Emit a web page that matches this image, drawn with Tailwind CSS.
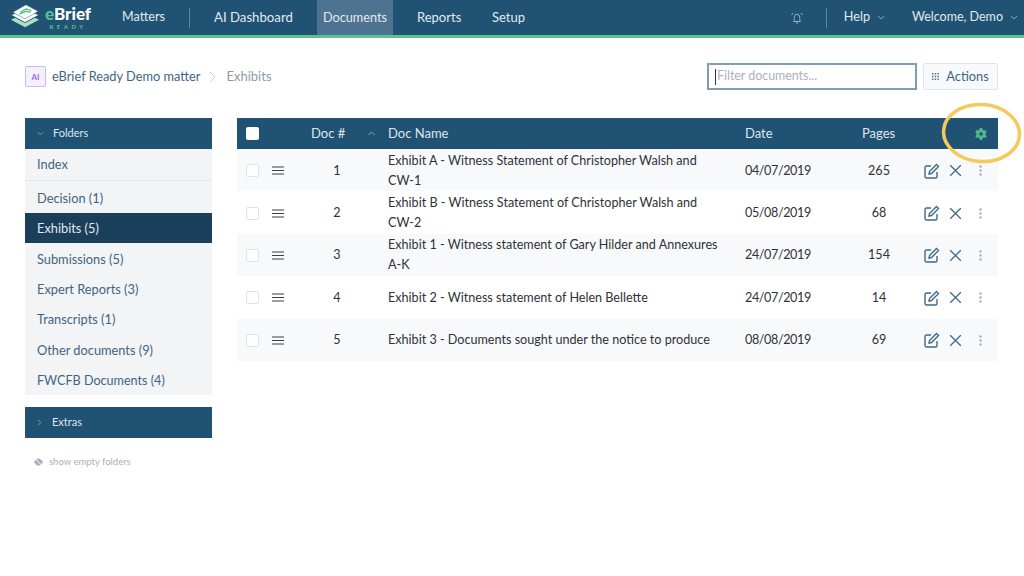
<!DOCTYPE html>
<html lang="en">
<head>
    <meta charset="UTF-8">
    <title>Exhibits - eBrief Ready</title>
    <script src="https://cdn.jsdelivr.net/npm/@tailwindcss/browser@4"></script>
</head>
<body class="relative w-[1024px] h-[576px] overflow-hidden bg-white font-['Lato','Open_Sans',sans-serif] text-[13px]">
    <!-- Top nav -->
    <header class="h-[38px] bg-[#205274] border-b-[3px] border-[#5cc08f] flex text-[#e3e9ee]">
        <div class="w-[122px] flex items-start pl-[10px] pt-[3px] gap-[4px]">
            <svg width="31" height="26" viewBox="0 0 33 26">
                <path d="M1 17l15-7 15 7-15 8z" fill="#a9e0c0"/>
                <path d="M1 12l15-7 15 7-15 8z" fill="#ffffff" stroke="#205274" stroke-width="1"/>
                <path d="M3 9L17 1l13 7-14 8z" fill="#ffffff" stroke="#205274" stroke-width="0.5"/>
                <path d="M11 9l6-3.500 6 1.500M10 11l7-3 5 1" fill="none" stroke="#5cc08f" stroke-width="1.500"/>
            </svg>
            <div class="flex flex-col items-center leading-none pt-[2px]">
                <span class="text-[17px] font-black leading-[17px] text-white"><span class="text-[#5cc08f]">e</span>Brief</span>
                <span class="text-[6px] font-bold tracking-[3.500px] text-[#5cc08f] mt-[1px] leading-[7px]">READY</span>
            </div>
        </div>
        <nav class="flex items-center h-[35px]">
            <a class="w-[67px] text-[12.600px]">Matters</a>
            <span class="w-px h-[20px] bg-white/30"></span>
            <a class="ml-[24px] w-[103px] text-[13.200px]">AI Dashboard</a>
            <a class="w-[76px] h-full flex items-center justify-center bg-[#4e7390] text-[12.700px]">Documents</a>
            <a class="ml-[24px] w-[75px]">Reports</a>
            <a>Setup</a>
        </nav>
        <div class="ml-auto flex items-center h-[35px]">
            <svg width="14" height="14" viewBox="0 0 14 14" fill="none" stroke="#9fb4c4" stroke-width="1">
                <path d="M3.500 10.500c.8-1 .8-2.500.8-4 0-2 1.200-3.300 2.700-3.300s2.700 1.300 2.700 3.300c0 1.500 0 3 .8 4z"/>
                <path d="M6 12h2M1.500 4L3 2M12.500 4L11 2"/>
            </svg>
            <span class="ml-[22px] w-px h-[20px] bg-white/30"></span>
            <a class="ml-[17px] text-[12.600px]">Help</a>
            <svg class="ml-[7px]" width="8" height="5" viewBox="0 0 8 5" fill="none" stroke="#8ca5b8"><path d="M1 1l3 3 3-3"/></svg>
            <a class="ml-[27px] text-[12.500px]">Welcome, Demo</a>
            <svg class="ml-[7px] mr-[6px]" width="8" height="5" viewBox="0 0 8 5" fill="none" stroke="#8ca5b8"><path d="M1 1l3 3 3-3"/></svg>
        </div>
    </header>

    <!-- Breadcrumb and filter -->
    <div class="flex items-center pl-[25px] pr-[26px] mt-[25px] h-[27px]">
        <span class="w-[21px] h-[21px] flex items-center justify-center rounded-[2px] border border-[#cdb6f2] bg-[#f5f0fe] text-[#9a6ae8] text-[8px] font-bold">AI</span>
        <span class="ml-[6px] text-[#3f6583] text-[12.800px]">eBrief Ready Demo matter</span>
        <svg class="ml-[9px]" width="7" height="12" viewBox="0 0 7 12" fill="none" stroke="#c4cbd2"><path d="M1 1l5 5-5 5"/></svg>
        <span class="ml-[10px] text-[#8f98a6]">Exhibits</span>
        <div class="ml-auto w-[210px] h-[27px] border-2 border-[#7f9fb5] flex items-center pl-[6px] text-[#a9b1bb] text-[12.400px]">
            <span class="w-px h-[16px] bg-[#333] mr-px"></span>Filter documents...
        </div>
        <button class="ml-[6px] w-[75px] h-[27px] border border-[#e2e6ea] bg-[#f7f9fa] rounded-[2px] flex items-center justify-center gap-[7px] text-[#3f6583] text-[12.800px]">
            <svg width="7" height="7" viewBox="0 0 7 7" fill="#54748d"><path d="M0 0h1.500v1.500H0zM2.700 0h1.500v1.500H2.700zM5.400 0h1.500v1.500H5.400zM0 2.700h1.500v1.500H0zM2.700 2.700h1.500v1.500H2.700zM5.400 2.700h1.500v1.500H5.400zM0 5.400h1.500v1.500H0zM2.700 5.400h1.500v1.500H2.700zM5.400 5.400h1.500v1.500H5.400z"/></svg>
            Actions
        </button>
    </div>

    <main class="flex pl-[25px] pr-[26px] mt-[28px]">
        <!-- Sidebar -->
        <aside class="w-[187px]">
            <div class="h-[31px] bg-[#205274] flex items-center pl-[12px] text-[11px] text-[#dfe6ec]">
                <svg width="7" height="5" viewBox="0 0 8 5" fill="none" stroke="#8ca5b8"><path d="M1 1l3 3 3-3"/></svg>
                <span class="ml-[9px]">Folders</span>
            </div>
            <div class="bg-[#f3f4f6] text-[#3f6583] text-[12.800px]">
                <div class="h-[32px] flex items-center pl-[12px] border-b border-[#e6e8eb]">Index</div>
                <div class="h-[32px] flex items-center pl-[12px] pt-[3px]">Decision (1)</div>
                <div class="h-[30px] flex items-center pl-[12px] pt-[2px] bg-[#193f5b] text-[#e3e9ee]">Exhibits (5)</div>
                <div class="h-[30.400px] flex items-center pl-[12px] pt-[2px]">Submissions (5)</div>
                <div class="h-[30.400px] flex items-center pl-[12px] pt-[2px]">Expert Reports (3)</div>
                <div class="h-[30.400px] flex items-center pl-[12px] pt-[2px]">Transcripts (1)</div>
                <div class="h-[30.400px] flex items-center pl-[12px] pt-[2px]">Other documents (9)</div>
                <div class="h-[30.400px] flex items-center pl-[12px] pt-[3px] text-[12.600px]">FWCFB Documents (4)</div>
            </div>
            <div class="mt-[12px] h-[31px] bg-[#205274] flex items-center pl-[12px] text-[11px] text-[#dfe6ec]">
                <svg width="5" height="7" viewBox="0 0 5 8" fill="none" stroke="#8ca5b8"><path d="M1 1l3 3-3 3"/></svg>
                <span class="ml-[10px]">Extras</span>
            </div>
            <div class="mt-[17px] pl-[9px] flex items-center gap-[6px] text-[9.500px] text-[#a9b1bb]">
                <svg width="9" height="8" viewBox="0 0 10 8" fill="#a9b1bb"><path d="M0 4c1.500-2.700 3.200-4 5-4s3.500 1.300 5 4c-1.500 2.700-3.200 4-5 4S1.500 6.700 0 4z"/><path d="M1 0l8 8" stroke="#fff" stroke-width="1"/></svg>
                show empty folders
            </div>
        </aside>

        <!-- Document table -->
        <section class="ml-[25px] w-[761px]">
            <div class="h-[31px] bg-[#205274] flex items-center text-[#dfe6ec]">
                <span class="ml-[9px] w-[13px] h-[13px] bg-white rounded-[2px]"></span>
                <span class="ml-[52px] w-[56px]">Doc #</span>
                <svg width="9" height="5" viewBox="0 0 8 5" fill="none" stroke="#8ca5b8"><path d="M1 4l3-3 3 3"/></svg>
                <span class="ml-[12px] w-[357px]">Doc Name</span>
                <span class="w-[117px]">Date</span>
                <span class="w-[113px]">Pages</span>
                <svg width="12" height="12" viewBox="0 0 24 24" fill="none" stroke="#4fb98a"><circle cx="12" cy="12" r="6.500" stroke-width="6"/><path d="M12 0v5M12 19v5M1.600 6l4.300 2.500M18.100 15.500l4.300 2.500M22.400 6l-4.300 2.500M5.900 15.500L1.600 18" stroke-width="5"/></svg>
            </div>
            <div class="text-[#2d3338] text-[12.600px] leading-[20px]">
                <div class="h-[42.400px] pt-px flex items-center bg-[#f8f9fb]">
                    <span class="ml-[9px] w-[13px] h-[13px] border border-[#dfe2e6] rounded-[2px] bg-white"></span>
                    <svg class="ml-[13px]" width="12" height="9" viewBox="0 0 12 9" stroke="#3a3f44" stroke-width="1.200"><path d="M0 1h12M0 4.500h12M0 8h12"/></svg>
                    <span class="w-[104px] pl-[2px] text-center">1</span>
                    <span class="w-[357px] pr-[20px]">Exhibit A - Witness Statement of Christopher Walsh and CW-1</span>
                    <span class="w-[100px] tracking-[-0.400px]">04/07/2019</span>
                    <span class="w-[68px] text-center">265</span>
                    <svg class="ml-[11px]" width="16" height="16" viewBox="0 0 16 16" fill="none" stroke="#3f6a8c" stroke-width="1.400"><path d="M13 9v4.500a1.500 1.500 0 0 1-1.500 1.500h-9A1.500 1.500 0 0 1 1 13.500v-9A1.500 1.500 0 0 1 2.500 3H7"/><path d="M5.500 8.500L12.500 1.500 14.500 3.500 7.500 10.500 5 11z"/></svg>
                    <svg class="ml-[10px]" width="11" height="11" viewBox="0 0 11 11" stroke="#3f6a8c" stroke-width="1.300"><path d="M0 0l11 11M11 0L0 11"/></svg>
                    <svg class="ml-[18px]" width="3" height="11" viewBox="0 0 3 11" fill="#a9b1bb"><circle cx="1.500" cy="1.500" r="1.200"/><circle cx="1.500" cy="5.500" r="1.200"/><circle cx="1.500" cy="9.500" r="1.200"/></svg>
                </div>
                <div class="h-[42.400px] pt-px flex items-center">
                    <span class="ml-[9px] w-[13px] h-[13px] border border-[#dfe2e6] rounded-[2px] bg-white"></span>
                    <svg class="ml-[13px]" width="12" height="9" viewBox="0 0 12 9" stroke="#3a3f44" stroke-width="1.200"><path d="M0 1h12M0 4.500h12M0 8h12"/></svg>
                    <span class="w-[104px] pl-[2px] text-center">2</span>
                    <span class="w-[357px] pr-[20px]">Exhibit B - Witness Statement of Christopher Walsh and CW-2</span>
                    <span class="w-[100px] tracking-[-0.400px]">05/08/2019</span>
                    <span class="w-[68px] text-center">68</span>
                    <svg class="ml-[11px]" width="16" height="16" viewBox="0 0 16 16" fill="none" stroke="#3f6a8c" stroke-width="1.400"><path d="M13 9v4.500a1.500 1.500 0 0 1-1.500 1.500h-9A1.500 1.500 0 0 1 1 13.500v-9A1.500 1.500 0 0 1 2.500 3H7"/><path d="M5.500 8.500L12.500 1.500 14.500 3.500 7.500 10.500 5 11z"/></svg>
                    <svg class="ml-[10px]" width="11" height="11" viewBox="0 0 11 11" stroke="#3f6a8c" stroke-width="1.300"><path d="M0 0l11 11M11 0L0 11"/></svg>
                    <svg class="ml-[18px]" width="3" height="11" viewBox="0 0 3 11" fill="#a9b1bb"><circle cx="1.500" cy="1.500" r="1.200"/><circle cx="1.500" cy="5.500" r="1.200"/><circle cx="1.500" cy="9.500" r="1.200"/></svg>
                </div>
                <div class="h-[42.400px] pt-px flex items-center bg-[#f8f9fb]">
                    <span class="ml-[9px] w-[13px] h-[13px] border border-[#dfe2e6] rounded-[2px] bg-white"></span>
                    <svg class="ml-[13px]" width="12" height="9" viewBox="0 0 12 9" stroke="#3a3f44" stroke-width="1.200"><path d="M0 1h12M0 4.500h12M0 8h12"/></svg>
                    <span class="w-[104px] pl-[2px] text-center">3</span>
                    <span class="w-[357px] pr-[20px]">Exhibit 1 - Witness statement of Gary Hilder and Annexures A-K</span>
                    <span class="w-[100px] tracking-[-0.400px]">24/07/2019</span>
                    <span class="w-[68px] text-center">154</span>
                    <svg class="ml-[11px]" width="16" height="16" viewBox="0 0 16 16" fill="none" stroke="#3f6a8c" stroke-width="1.400"><path d="M13 9v4.500a1.500 1.500 0 0 1-1.500 1.500h-9A1.500 1.500 0 0 1 1 13.500v-9A1.500 1.500 0 0 1 2.500 3H7"/><path d="M5.500 8.500L12.500 1.500 14.500 3.500 7.500 10.500 5 11z"/></svg>
                    <svg class="ml-[10px]" width="11" height="11" viewBox="0 0 11 11" stroke="#3f6a8c" stroke-width="1.300"><path d="M0 0l11 11M11 0L0 11"/></svg>
                    <svg class="ml-[18px]" width="3" height="11" viewBox="0 0 3 11" fill="#a9b1bb"><circle cx="1.500" cy="1.500" r="1.200"/><circle cx="1.500" cy="5.500" r="1.200"/><circle cx="1.500" cy="9.500" r="1.200"/></svg>
                </div>
                <div class="h-[42.400px] pt-px flex items-center">
                    <span class="ml-[9px] w-[13px] h-[13px] border border-[#dfe2e6] rounded-[2px] bg-white"></span>
                    <svg class="ml-[13px]" width="12" height="9" viewBox="0 0 12 9" stroke="#3a3f44" stroke-width="1.200"><path d="M0 1h12M0 4.500h12M0 8h12"/></svg>
                    <span class="w-[104px] pl-[2px] text-center">4</span>
                    <span class="w-[357px] pr-[20px]">Exhibit 2 - Witness statement of Helen Bellette</span>
                    <span class="w-[100px] tracking-[-0.400px]">24/07/2019</span>
                    <span class="w-[68px] text-center">14</span>
                    <svg class="ml-[11px]" width="16" height="16" viewBox="0 0 16 16" fill="none" stroke="#3f6a8c" stroke-width="1.400"><path d="M13 9v4.500a1.500 1.500 0 0 1-1.500 1.500h-9A1.500 1.500 0 0 1 1 13.500v-9A1.500 1.500 0 0 1 2.500 3H7"/><path d="M5.500 8.500L12.500 1.500 14.500 3.500 7.500 10.500 5 11z"/></svg>
                    <svg class="ml-[10px]" width="11" height="11" viewBox="0 0 11 11" stroke="#3f6a8c" stroke-width="1.300"><path d="M0 0l11 11M11 0L0 11"/></svg>
                    <svg class="ml-[18px]" width="3" height="11" viewBox="0 0 3 11" fill="#a9b1bb"><circle cx="1.500" cy="1.500" r="1.200"/><circle cx="1.500" cy="5.500" r="1.200"/><circle cx="1.500" cy="9.500" r="1.200"/></svg>
                </div>
                <div class="h-[42.400px] pt-px flex items-center bg-[#f8f9fb]">
                    <span class="ml-[9px] w-[13px] h-[13px] border border-[#dfe2e6] rounded-[2px] bg-white"></span>
                    <svg class="ml-[13px]" width="12" height="9" viewBox="0 0 12 9" stroke="#3a3f44" stroke-width="1.200"><path d="M0 1h12M0 4.500h12M0 8h12"/></svg>
                    <span class="w-[104px] pl-[2px] text-center">5</span>
                    <span class="w-[357px] pr-[20px]">Exhibit 3 - Documents sought under the notice to produce</span>
                    <span class="w-[100px] tracking-[-0.400px]">08/08/2019</span>
                    <span class="w-[68px] text-center">69</span>
                    <svg class="ml-[11px]" width="16" height="16" viewBox="0 0 16 16" fill="none" stroke="#3f6a8c" stroke-width="1.400"><path d="M13 9v4.500a1.500 1.500 0 0 1-1.500 1.500h-9A1.500 1.500 0 0 1 1 13.500v-9A1.500 1.500 0 0 1 2.500 3H7"/><path d="M5.500 8.500L12.500 1.500 14.500 3.500 7.500 10.500 5 11z"/></svg>
                    <svg class="ml-[10px]" width="11" height="11" viewBox="0 0 11 11" stroke="#3f6a8c" stroke-width="1.300"><path d="M0 0l11 11M11 0L0 11"/></svg>
                    <svg class="ml-[18px]" width="3" height="11" viewBox="0 0 3 11" fill="#a9b1bb"><circle cx="1.500" cy="1.500" r="1.200"/><circle cx="1.500" cy="5.500" r="1.200"/><circle cx="1.500" cy="9.500" r="1.200"/></svg>
                </div>
            </div>
        </section>
    </main>

    <!-- Yellow highlight drawn over the settings gear -->
    <svg class="absolute left-[940px] top-[100px]" width="84" height="66" viewBox="0 0 84 66" fill="none" stroke="#f5c95c" stroke-width="3.500">
        <ellipse cx="41.500" cy="33" rx="38" ry="28.500" transform="rotate(4 41.500 33)"/>
    </svg>
</body>
</html>
